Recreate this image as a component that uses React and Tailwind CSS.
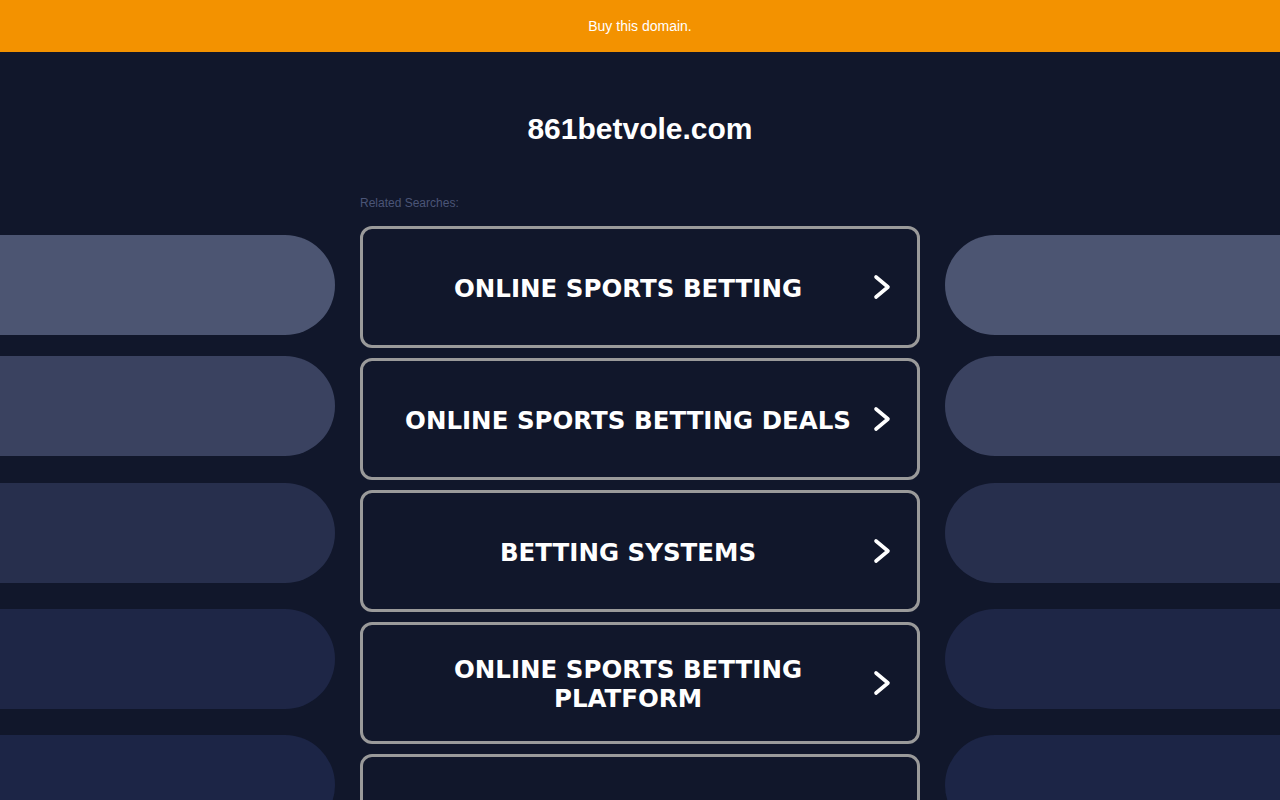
const searches = [
  "ONLINE SPORTS BETTING",
  "ONLINE SPORTS BETTING DEALS",
  "BETTING SYSTEMS",
  "ONLINE SPORTS BETTING PLATFORM",
  "SPORTS BETTING ODDS",
];

const pills = [
  { top: "mt-[235px]", bg: "bg-[#4c5572]" },
  { top: "mt-[21px]", bg: "bg-[#3a4260]" },
  { top: "mt-[27px]", bg: "bg-[#272f4d]" },
  { top: "mt-[26px]", bg: "bg-[#1e2646]" },
  { top: "mt-[26px]", bg: "bg-[#1c2546]" },
];

const SidePills = ({ side }) => (
  <div className="flex flex-col">
    {pills.map((p, i) => (
      <div
        key={i}
        className={`${p.top} ${p.bg} h-[100px] w-[335px] shrink-0 ${side === "left" ? "rounded-r-full" : "rounded-l-full"}`}
      />
    ))}
  </div>
);

const Chevron = () => (
  <svg width="20" height="26" viewBox="0 0 20 26" className="shrink-0">
    <path d="M4 3 L16 13 L4 23" fill="none" stroke="white" strokeWidth="3.6" strokeLinecap="round" strokeLinejoin="round" />
  </svg>
);

const App = () => {
  return (
    <div className="h-[800px] overflow-hidden bg-[#11172b] font-['Liberation_Sans',Arial,sans-serif]">
      <div className="h-[52px] bg-[#f39200] flex items-center justify-center text-white text-sm">
        Buy this domain.
      </div>
      <div className="relative">
        <div className="absolute inset-x-0 top-[-52px] flex justify-between pointer-events-none">
          <SidePills side="left" />
          <SidePills side="right" />
        </div>
        <div className="relative w-[560px] mx-auto">
          <h1 className="text-white font-bold text-[30px] text-center pt-[59px] leading-[36px]">
            861betvole.com
          </h1>
          <p className="mt-[49px] text-[12px] text-[#4b5577] leading-[14px]">Related Searches:</p>
          <div className="mt-[16px] flex flex-col gap-[10px]">
            {searches.map((s) => (
              <a
                key={s}
                href="#"
                className="h-[122px] shrink-0 border-[3px] border-[#9a9a9a] rounded-[12px] flex items-center pl-[21px] pr-[25px]"
              >
                <span className="flex-1 text-center text-white font-bold text-[24.5px] leading-[29px] pt-[2px] font-['DejaVu_Sans',Verdana,sans-serif] px-1">
                  {s}
                </span>
                <Chevron />
              </a>
            ))}
          </div>
        </div>
      </div>
    </div>
  );
};

export default App;
